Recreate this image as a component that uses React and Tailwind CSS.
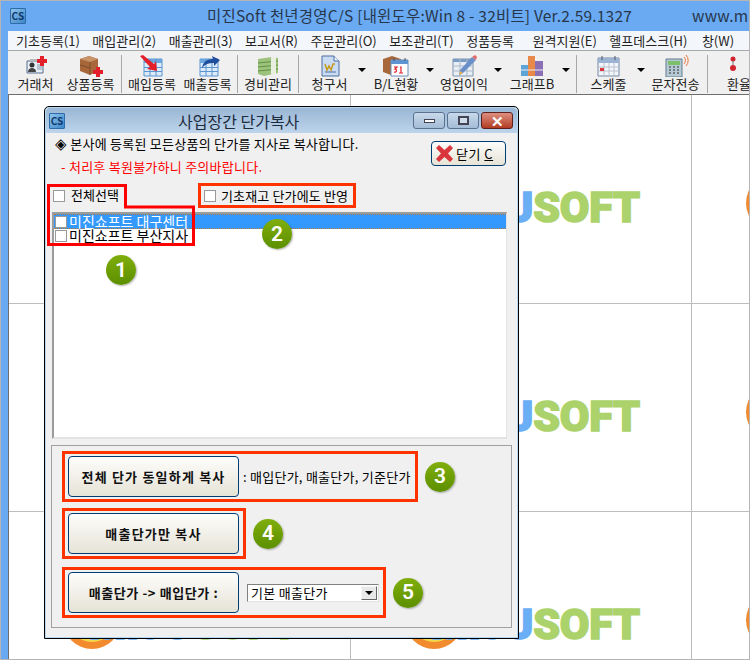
const Card = () => (
  <svg width="26" height="22" viewBox="0 0 26 22">
    <path d="M4 6h16v12H4z" fill="#e8eef7" stroke="#5a6f8c" />
    <path d="M7 4h12v2H7z" fill="#b9b9b9" />
    <circle cx="9" cy="10" r="2.5" fill="#333" />
    <path d="M5 17c0-3 2-4 4-4s4 1 4 4z" fill="#444" />
    <path d="M14 10h5M14 12h5M14 14h5" stroke="#8a97a8" />
    <path d="M17 1h4v3h3v4h-3v3h-4V8h-3V4h3z" fill="#e3202a" />
  </svg>
);

const Box = () => (
  <svg width="26" height="22" viewBox="0 0 26 22">
    <path d="M2 4l9-3 9 3v12l-8 4-10-4z" fill="#a8673a" />
    <path d="M2 4l10 3 8-3-9-3z" fill="#c9936a" />
    <path d="M12 7v13M2 10l10 3" stroke="#7d4a27" />
    <path d="M18 12h4v3h3v4h-3v3h-4v-3h-3v-4h3z" fill="#e3202a" />
  </svg>
);

const Sheet = ({ arrow }) => (
  <svg width="26" height="22" viewBox="0 0 26 22">
    <path d="M5 4h18v17H5z" fill="#dcebf9" stroke="#5b95d0" />
    <path d="M5 4h18v4H5z" fill="#6ba6e0" />
    <path d="M5 12.5h18M5 16.5h18M11 4v17M17 4v17" stroke="#5b95d0" />
    {arrow === "in" && <path d="M1 1l3-1 11 9 2-3 1 10-10-2 3-2z" fill="#e3202a" />}
    {arrow === "out" && <path d="M7 13c1-6 5-9 11-9l-1-3 8 4-6 6v-3c-5 0-9 1-12 5z" fill="#1f4f9c" />}
  </svg>
);

const Money = () => (
  <svg width="26" height="22" viewBox="0 0 26 22">
    <path d="M3 4l14-2 6 1v15l-14 3-6-2z" fill="#9cc27c" />
    <path d="M3 8l20-2M3 12l20-2M3 16l20-2" stroke="#5f9146" />
    <path d="M16 2h5v17l-5 1z" fill="#e9efe0" />
  </svg>
);

const Invoice = () => (
  <svg width="26" height="22" viewBox="0 0 26 22">
    <path d="M5 1h12l5 5v15H5z" fill="#c9dcf3" stroke="#4c6f9f" />
    <path d="M17 1v5h5" fill="#eef4fb" stroke="#4c6f9f" />
    <path d="M8 9l2 6 2-4 2 4 2-6 2 0" fill="none" stroke="#c79a1f" strokeWidth="1.5" />
    <path d="M8 17h11" stroke="#4c6f9f" />
  </svg>
);

const BoxCalendar = () => (
  <svg width="26" height="22" viewBox="0 0 26 22">
    <path d="M0 4l9-3 9 3v13L8 20 0 17z" fill="#a8673a" />
    <path d="M8 5h17v16H8z" fill="#fff" stroke="#6d8fbb" />
    <path d="M8 5h17v4H8z" fill="#5f93d1" />
    <path d="M11 3v3M22 3v3" stroke="#456" />
    <path d="M11 12h3l-2 2c2 0 2 4-1 3M17 12h1v6M16 18h4" fill="none" stroke="#e3202a" strokeWidth="1.2" />
  </svg>
);

const Pencil = () => (
  <svg width="26" height="22" viewBox="0 0 26 22">
    <path d="M2 4h20v17H2z" fill="#e8eef4" stroke="#7f94ad" />
    <path d="M2 4h20v3H2z" fill="#7a9cc4" />
    <path d="M2 11h20M2 16h20M9 4v17M16 4v17" stroke="#a9b9ca" />
    <path d="M8 20l1-5L21 2l4 3-13 13z" fill="#6b8fc9" />
    <path d="M21 2l4 3 1-3-2-2z" fill="#e46a6a" />
    <path d="M8 20l1-4 3 2z" fill="#e9b04b" />
  </svg>
);

const Bars = () => (
  <svg width="26" height="22" viewBox="0 0 26 22">
    <path d="M2 10h7v11H2z" fill="#5fa4d8" />
    <path d="M9 1h7v20H9z" fill="#e8894a" />
    <path d="M16 6h8v15h-8z" fill="#8a6fb5" />
    <path d="M2 15h22" stroke="#e9eef5" />
  </svg>
);

const Calendar = () => (
  <svg width="26" height="22" viewBox="0 0 26 22">
    <path d="M2 3h21v18H2z" fill="#f2f5f9" stroke="#7487a5" />
    <path d="M2 3h21v5H2z" fill="#9db3d3" />
    <path d="M6 1v4M19 1v4" stroke="#556" />
    <path d="M3 12h19M3 16h19M8 8v12M13 8v12M18 8v12" stroke="#b9c2cf" />
    <path d="M4 13h4v3H4z" fill="#d9363e" />
  </svg>
);

const Phone = () => (
  <svg width="26" height="22" viewBox="0 0 26 22">
    <path d="M3 4h16v18H3z" fill="#b8c9d6" stroke="#5f7f8f" />
    <path d="M5 6h12v4H5z" fill="#7cc06a" />
    <path d="M6 12h2M10 12h2M14 12h2M6 15h2M10 15h2M14 15h2M6 18h2M10 18h2M14 18h2" stroke="#566" strokeWidth="1.5" />
    <path d="M21 2a5 5 0 0 1 0 7M23 0a8 8 0 0 1 0 11" fill="none" stroke="#e8743b" />
  </svg>
);

const Dots = () => (
  <svg width="26" height="22" viewBox="0 0 26 22">
    <circle cx="7" cy="4" r="2.5" fill="#d02530" />
    <circle cx="7" cy="13" r="3" fill="#d02530" />
    <path d="M7 6v4" stroke="#777" />
  </svg>
);

const Sep = ({ className = "" }) => (
  <div className={"w-[2px] h-[38px] self-center border-l border-[#a8a8a8] border-r-white " + className} />
);

const Caret = () => (
  <div className="w-[10px] flex justify-center pt-[17px]">
    <div className="w-0 h-0 border-x-[4px] border-x-transparent border-t-[4px] border-t-black" />
  </div>
);

const Tool = ({ w, icon, label }) => (
  <div className={"flex flex-col items-center shrink-0 " + w}>
    <div className="h-[24px] mt-[3px] flex items-center">{icon}</div>
    <span className="text-[13px] leading-[16px] mt-[-2px] whitespace-nowrap text-[#222]">{label}</span>
  </div>
);

const CsIcon = () => (
  <div className="w-[16px] h-[16px] shrink-0 rounded-[1px] border border-[#2d6ca8] bg-linear-to-br from-[#8ec4ee] to-[#3b86c8] flex items-center justify-center text-[10px] leading-none font-bold text-[#103a6b]">
    CS
  </div>
);

const Check = () => (
  <div className="w-[12px] h-[12px] shrink-0 bg-white border border-[#9a9a9a]" />
);

const Badge = ({ n, className = "" }) => (
  <div className={"w-[30px] h-[30px] shrink-0 rounded-full bg-linear-to-b from-[#7fae0c] to-[#5c8f00] shadow-[1px_1px_2px_rgba(0,0,0,0.3)] flex items-center justify-center text-white text-[21px] font-semibold leading-none [font-family:Roboto,sans-serif] " + className}>
    {n}
  </div>
);

const BigButton = ({ children, className = "tracking-[1.2px]" }) => (
  <button className={"w-[171px] h-[41px] shrink-0 rounded-[4px] border border-[#003c74] bg-linear-to-b from-[#fdfdfb] to-[#e6e3d6] text-[13px] font-bold text-[#111] " + className}>
    {children}
  </button>
);

const Tile = () => (
  <div className="border-r border-b border-[#bdbdbd] flex items-start pl-[54px] pt-[79px]">
    <svg width="58" height="58" viewBox="0 0 58 58" className="shrink-0">
      <circle cx="29" cy="29" r="29" fill="#f28a2e" />
      <circle cx="29" cy="26" r="25" fill="#f4d84a" />
      <circle cx="29" cy="23" r="20" fill="#8cc63f" />
    </svg>
    <div className="w-[177px] shrink-0 flex justify-end pt-[7px] text-[43px] leading-[52px] font-black tracking-[-0.2px] [font-family:Roboto,sans-serif] whitespace-nowrap [-webkit-text-stroke:1.5px_currentColor]">
      <span className="text-[#6aaef5]">MIJU</span>
      <span className="text-[#abd26b]">SOFT</span>
    </div>
  </div>
);

const winBtn = "w-[32px] h-[17px] rounded-[3px] border border-[#5a7290] flex items-center justify-center";

export default function App() {
  return (
    <div className="relative w-[750px] h-[660px] flex flex-col overflow-hidden border border-[#b5b5b5] bg-[#69aaf3] [font-family:'Noto_Sans_CJK_KR',sans-serif] text-black">
      {/* main window title */}
      <div className="h-[30px] shrink-0 flex items-center pl-[9px] overflow-hidden whitespace-nowrap text-[15.5px] tracking-[0.2px] text-[#28364a]">
        <CsIcon />
        <span className="ml-[181px]">미진Soft 천년경영C/S [내윈도우:Win 8 - 32비트] Ver.2.59.1327</span>
        <span className="ml-[60px]">www.mijusoft.com</span>
      </div>

      <div className="flex-1 min-h-0 ml-[7px] flex flex-col">
        <div className="h-[20px] shrink-0 bg-[#f3f6fa] border-b border-[#a8a8a8] flex items-center gap-[12.5px] pl-[8px] text-[13px] whitespace-nowrap text-[#222]">
          <span>기초등록(1)</span>
          <span>매입관리(2)</span>
          <span>매출관리(3)</span>
          <span>보고서(R)</span>
          <span>주문관리(O)</span>
          <span>보조관리(T)</span>
          <span>정품등록</span>
          <span className="ml-[6px]">원격지원(E)</span>
          <span>헬프데스크(H)</span>
          <span className="ml-[2px]">창(W)</span>
        </div>

        <div className="h-[44px] shrink-0 bg-[#f0f0f0] border-b border-[#6e6e6e] flex items-start pl-[1px] overflow-hidden">
          <Tool w="w-[53px]" icon={<Card />} label="거래처" />
          <Tool w="w-[57px]" icon={<Box />} label="상품등록" />
          <Sep className="mx-[2px] mt-[2px]" />
          <Tool w="w-[56px]" icon={<Sheet arrow="in" />} label="매입등록" />
          <Tool w="w-[55px]" icon={<Sheet arrow="out" />} label="매출등록" />
          <Sep className="mx-[2px] mt-[2px]" />
          <Tool w="w-[56px]" icon={<Money />} label="경비관리" />
          <Sep className="mx-[2px] mt-[2px]" />
          <Tool w="w-[57px]" icon={<Invoice />} label="청구서" />
          <Caret />
          <Tool w="w-[60px]" icon={<BoxCalendar />} label="B/L현황" />
          <Caret />
          <Tool w="w-[60px]" icon={<Pencil />} label="영업이익" />
          <Caret />
          <Tool w="w-[60px]" icon={<Bars />} label="그래프B" />
          <Caret />
          <Sep className="ml-[6px] mr-[3px] mt-[2px]" />
          <Tool w="w-[57px]" icon={<Calendar />} label="스케줄" />
          <Caret />
          <Tool w="w-[61px]" icon={<Phone />} label="문자전송" />
          <Sep className="mx-[1px] mt-[2px]" />
          <Tool w="w-[60px]" icon={<Dots />} label="환율" />
        </div>

        <div className="flex-1 min-h-0 overflow-hidden bg-white border-l border-[#6e6e6e] grid grid-cols-[342px_341px_341px] grid-rows-[209px_208px_208px]">
          {Array.from({ length: 9 }).map((_, i) => (
            <Tile key={i} />
          ))}
        </div>
      </div>

      {/* 사업장간 단가복사 dialog */}
      <div className="absolute left-[43px] top-[105px] w-[475px] h-[533px] flex flex-col rounded-t-[5px] border border-black bg-[#f0f0f0] shadow-[inset_0_0_0_1px_#b5d8f2]">
        <div className="h-[25px] shrink-0 mx-[1px] mt-[1px] rounded-t-[4px] bg-linear-to-b from-[#9bb7d5] to-[#bdd4eb] flex items-center pl-[3px] pr-[4px]">
          <CsIcon />
          <span className="ml-[113px] text-[16px] leading-none text-[#1c2b3e] whitespace-nowrap">사업장간 단가복사</span>
          <div className="ml-auto flex gap-[2px]">
            <div className={winBtn + " bg-linear-to-b from-[#c8d9ea] to-[#a3bcd6]"}>
              <div className="w-[11px] h-[4px] bg-white border border-[#445]" />
            </div>
            <div className={winBtn + " bg-linear-to-b from-[#c8d9ea] to-[#a3bcd6]"}>
              <div className="w-[11px] h-[9px] border-2 border-[#445] bg-[#cfdcea]" />
            </div>
            <div className={winBtn + " bg-linear-to-b from-[#dd8f80] to-[#b23a20] border-[#5e1f1f]"}>
              <span className="text-white text-[15px] font-bold leading-none">✕</span>
            </div>
          </div>
        </div>

        <div className="flex-1 min-h-0 mx-[1px] mb-[1px] flex flex-col text-[13px]">
          <div className="h-[50px] shrink-0 flex justify-between pl-[9px] pr-[11px]">
            <div className="leading-[23px] whitespace-nowrap tracking-[0.25px] -mt-[1px]">
              <p>
                <span className="text-[15px] leading-none mr-[3px]">◈</span>본사에 등록된 모든상품의 단가를 지사로 복사합니다.
              </p>
              <p className="text-[#ff0000] pl-[6px]">- 처리후 복원불가하니 주의바랍니다.</p>
            </div>
            <button className="mt-[8px] w-[75px] h-[25px] rounded-[4px] border border-[#003c74] bg-linear-to-b from-[#fdfdfb] to-[#e6e3d6] flex items-center pl-[4px] gap-[3px]">
              <svg width="17" height="17" viewBox="0 0 17 17" className="shrink-0">
                <path d="M3 0l5.500 5L14 0l3 3-5 5.500 5 5.500-3 3-5.500-5L3 17l-3-3 5-5.500L0 3z" fill="#d9363e" />
              </svg>
              <span className="tracking-[0.5px] whitespace-nowrap">
                닫기 <span className="underline">C</span>
              </span>
            </button>
          </div>

          <div className="h-[29px] shrink-0 flex items-start">
            <div className="ml-[7px] w-[145px] flex items-center gap-[6px] h-[25px]">
              <Check />
              <span className="-mt-[1px]">전체선택</span>
            </div>
            <div className="w-[158px] h-[25px] border-[3px] border-[#ff3300] flex items-center gap-[5px] pl-[3px] whitespace-nowrap tracking-[0.15px]">
              <Check />
              <span>기초재고 단가에도 반영</span>
            </div>
          </div>

          <div className="h-[227px] w-[455px] shrink-0 ml-[6px] bg-white border-t-2 border-l-2 border-[#9c9c9c] border-r border-r-[#e3e3e3] border-b-2 border-b-[#e3e3e3] text-[14px] leading-[14px] whitespace-nowrap">
            <div className="h-[15px] flex items-center pl-[1px] bg-[#3399ff] border-y border-dotted border-y-[#b87a3a] text-white">
              <Check />
              <span className="ml-[2px] -mt-[2px]">미진쇼프트 대구센터</span>
            </div>
            <div className="h-[14px] flex items-center pl-[1px]">
              <Check />
              <span className="ml-[2px] -mt-[2px]">미진쇼프트 부산지사</span>
            </div>
          </div>

          <div className="mt-[6px] ml-[5px] w-[461px] h-[183px] shrink-0 border border-[#a0a0a0] pl-[10px] pt-[5px] flex flex-col">
            <div className="flex items-center">
              <div className="w-[356px] h-[51px] border-[3px] border-[#ff3300] flex items-center pl-[3px]">
                <BigButton>전체 단가 동일하게 복사</BigButton>
                <span className="ml-[4px] whitespace-nowrap tracking-[0.25px]">: 매입단가, 매출단가, 기준단가</span>
              </div>
              <Badge n="3" className="ml-[7px]" />
            </div>
            <div className="flex items-center mt-[6px]">
              <div className="w-[184px] h-[51px] border-[3px] border-[#ff3300] flex items-center pl-[3px]">
                <BigButton>매출단가만 복사</BigButton>
              </div>
              <Badge n="4" className="ml-[7px]" />
            </div>
            <div className="flex items-center mt-[8px]">
              <div className="w-[324px] h-[51px] border-[3px] border-[#ff3300] flex items-center pl-[3px]">
                <BigButton className="tracking-[0.6px]">매출단가 -&gt; 매입단가 :</BigButton>
                <div className="ml-[8px] w-[132px] h-[18px] bg-white border border-[#808080] border-r-[#e3e3e3] border-b-[#e3e3e3] flex items-center justify-between pl-[3px] pr-[1px] whitespace-nowrap tracking-[0.3px]">
                  <span>기본 매출단가</span>
                  <div className="w-[16px] h-[14px] bg-[#e8e8e8] border border-[#f5f5f5] border-r-[#666] border-b-[#666] flex items-center justify-center">
                    <div className="w-0 h-0 border-x-[4px] border-x-transparent border-t-[4px] border-t-black" />
                  </div>
                </div>
              </div>
              <Badge n="5" className="ml-[7px]" />
            </div>
          </div>
        </div>

        {/* red marker over 전체선택 and the list rows */}
        <svg width="473" height="531" viewBox="0 0 473 531" className="absolute left-0 top-0 pointer-events-none" fill="none">
          <path d="M3.500 78.500H80.500V100H148.500V137.500H3.500Z" stroke="#ff0000" strokeWidth="3" />
        </svg>
        <Badge n="1" className="absolute left-[61px] top-[148px]" />
        <Badge n="2" className="absolute left-[217px] top-[112px]" />
      </div>
    </div>
  );
}
